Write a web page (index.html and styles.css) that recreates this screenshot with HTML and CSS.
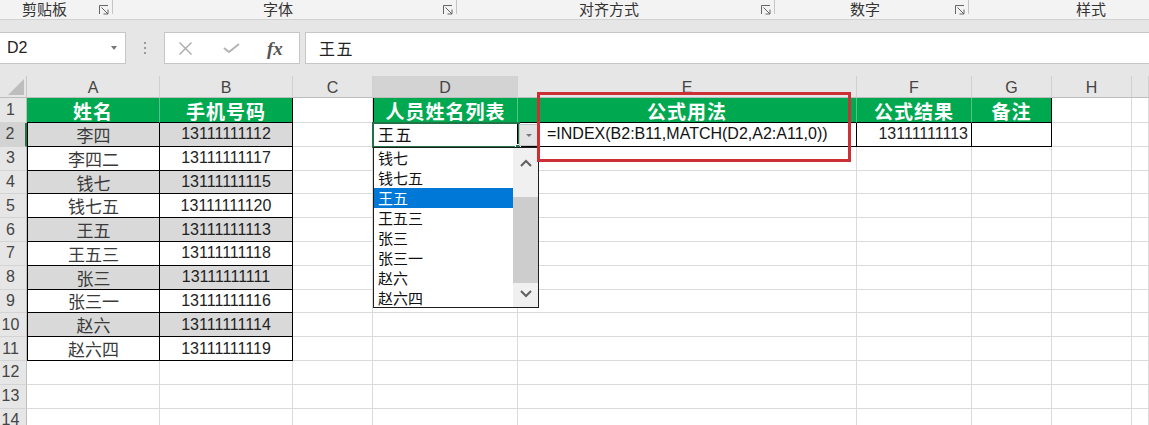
FILE: index.html
```html
<!DOCTYPE html>
<html lang="zh-CN">
<head>
<meta charset="utf-8">
<title>Excel INDEX MATCH</title>
<link rel="stylesheet" href="styles.css">
</head>
<body>
<div class="ribbon">
  <div class="grp g1"><span class="lbl">剪贴板</span><svg class="launch" viewBox="0 0 10 10"><path d="M0.5 9V0.5H9" /><path d="M2.5 2.5L9 9M9 4.5V9H4.5" /></svg><i class="sep"></i></div>
  <div class="grp g2"><span class="lbl">字体</span><svg class="launch" viewBox="0 0 10 10"><path d="M0.5 9V0.5H9" /><path d="M2.5 2.5L9 9M9 4.5V9H4.5" /></svg><i class="sep"></i></div>
  <div class="grp g3"><span class="lbl">对齐方式</span><svg class="launch" viewBox="0 0 10 10"><path d="M0.5 9V0.5H9" /><path d="M2.5 2.5L9 9M9 4.5V9H4.5" /></svg><i class="sep"></i></div>
  <div class="grp g4"><span class="lbl">数字</span><svg class="launch" viewBox="0 0 10 10"><path d="M0.5 9V0.5H9" /><path d="M2.5 2.5L9 9M9 4.5V9H4.5" /></svg><i class="sep"></i></div>
  <div class="grp g5"><span class="lbl">样式</span></div>
</div>
<div class="fbar">
  <div class="namebox"><span>D2</span><i class="nbarrow"></i></div>
  <div class="dots"><i></i><i></i><i></i></div>
  <div class="fxbox">
    <svg class="xicon" viewBox="0 0 15 13"><path d="M1.5 0.5L13.5 12.5M13.5 0.5L1.5 12.5" /></svg>
    <svg class="vicon" viewBox="0 0 17 10"><path d="M1 5L6 9L16 1" /></svg>
    <span class="fx">fx</span>
  </div>
  <div class="finput">王五</div>
</div>
<div class="sheet">
  <div class="corner"><svg viewBox="0 0 27 22"><polygon points="24,3 24,19 8,19" /></svg></div>
  <div class="ch">A</div><div class="ch">B</div><div class="ch">C</div><div class="ch on">D</div><div class="ch">E</div><div class="ch">F</div><div class="ch">G</div><div class="ch">H</div><div class="ch"></div>

  <div class="rh">1</div>
  <div class="c g">姓名</div><div class="c g rb">手机号码</div><div class="c"></div>
  <div class="c g tl">人员姓名列表</div><div class="c g">公式用法</div><div class="c g">公式结果</div><div class="c g rb">备注</div><div class="c"></div><div class="c"></div>

  <div class="rh on">2</div>
  <div class="c t tl alt nm">李四</div><div class="c t alt num">13111111112</div><div class="c"></div>
  <div class="c t tl dv">王五</div><div class="c t fm">=INDEX(B2:B11,MATCH(D2,A2:A11,0))</div><div class="c t num r">13111111113</div><div class="c t"></div><div class="c"></div><div class="c"></div>

  <div class="rh">3</div>
  <div class="c t tl nm">李四二</div><div class="c t num">13111111117</div><div class="c"></div><div class="c"></div><div class="c"></div><div class="c"></div><div class="c"></div><div class="c"></div><div class="c"></div>

  <div class="rh">4</div>
  <div class="c t tl alt nm">钱七</div><div class="c t alt num">13111111115</div><div class="c"></div><div class="c"></div><div class="c"></div><div class="c"></div><div class="c"></div><div class="c"></div><div class="c"></div>

  <div class="rh">5</div>
  <div class="c t tl nm">钱七五</div><div class="c t num">13111111120</div><div class="c"></div><div class="c"></div><div class="c"></div><div class="c"></div><div class="c"></div><div class="c"></div><div class="c"></div>

  <div class="rh">6</div>
  <div class="c t tl alt nm">王五</div><div class="c t alt num">13111111113</div><div class="c"></div><div class="c"></div><div class="c"></div><div class="c"></div><div class="c"></div><div class="c"></div><div class="c"></div>

  <div class="rh">7</div>
  <div class="c t tl nm">王五三</div><div class="c t num">13111111118</div><div class="c"></div><div class="c"></div><div class="c"></div><div class="c"></div><div class="c"></div><div class="c"></div><div class="c"></div>

  <div class="rh">8</div>
  <div class="c t tl alt nm">张三</div><div class="c t alt num">13111111111</div><div class="c"></div><div class="c"></div><div class="c"></div><div class="c"></div><div class="c"></div><div class="c"></div><div class="c"></div>

  <div class="rh">9</div>
  <div class="c t tl nm">张三一</div><div class="c t num">13111111116</div><div class="c"></div><div class="c"></div><div class="c"></div><div class="c"></div><div class="c"></div><div class="c"></div><div class="c"></div>

  <div class="rh">10</div>
  <div class="c t tl alt nm">赵六</div><div class="c t alt num">13111111114</div><div class="c"></div><div class="c"></div><div class="c"></div><div class="c"></div><div class="c"></div><div class="c"></div><div class="c"></div>

  <div class="rh">11</div>
  <div class="c t tl nm">赵六四</div><div class="c t num">13111111119</div><div class="c"></div><div class="c"></div><div class="c"></div><div class="c"></div><div class="c"></div><div class="c"></div><div class="c"></div>

  <div class="rh">12</div>
  <div class="c"></div><div class="c"></div><div class="c"></div><div class="c"></div><div class="c"></div><div class="c"></div><div class="c"></div><div class="c"></div><div class="c"></div>

  <div class="rh">13</div>
  <div class="c"></div><div class="c"></div><div class="c"></div><div class="c"></div><div class="c"></div><div class="c"></div><div class="c"></div><div class="c"></div><div class="c"></div>

  <div class="rh">14</div>
  <div class="c"></div><div class="c"></div><div class="c"></div><div class="c"></div><div class="c"></div><div class="c"></div><div class="c"></div><div class="c"></div><div class="c"></div>
</div>

<div class="selbox"></div>
<div class="handle"></div>
<div class="ddbtn"><i></i></div>
<div class="ddlist">
  <div class="items">
    <div class="item">钱七</div>
    <div class="item">钱七五</div>
    <div class="item on">王五</div>
    <div class="item">王五三</div>
    <div class="item">张三</div>
    <div class="item">张三一</div>
    <div class="item">赵六</div>
    <div class="item">赵六四</div>
  </div>
  <div class="sb">
    <svg class="chev up" viewBox="0 0 12 8"><path d="M1 7L6 2L11 7" /></svg>
    <div class="thumb"></div>
    <svg class="chev down" viewBox="0 0 12 8"><path d="M1 1L6 6L11 1" /></svg>
  </div>
</div>
<div class="redbox"></div>
</body>
</html>
```

FILE: styles.css
```css
* { box-sizing: border-box; }
body {
  margin: 0;
  width: 1149px;
  height: 425px;
  overflow: hidden;
  position: relative;
  background: #e6e6e6;
  font-family: "Liberation Sans", "Noto Sans CJK SC", sans-serif;
  color: #222;
}

/* ribbon group labels */
.ribbon {
  height: 20px;
  background: #f3f3f3;
  border-bottom: 1px solid #d2d2d2;
  display: flex;
}
.grp {
  display: flex;
  align-items: flex-start;
  height: 19px;
  font-family: "Noto Sans CJK SC", sans-serif;
  font-size: 15px;
  line-height: 18px;
  color: #333;
}
.g1 { width: 113px; }
.g2 { width: 344px; }
.g3 { width: 318px; }
.g4 { width: 194px; }
.g5 { flex: 1; }
.lbl { flex: 1; text-align: center; }
.g1 .lbl { padding-right: 10px; }
.g5 .lbl { text-align: left; padding-left: 107px; }
.launch {
  width: 10px;
  height: 10px;
  margin-top: 5px;
  margin-right: 3px;
  fill: none;
  stroke: #666;
  stroke-width: 1;
}
.sep {
  width: 1px;
  height: 14px;
  background: #c6c6c6;
}

/* formula bar */
.fbar {
  height: 56px;
  display: flex;
  padding: 12px 0;
}
.namebox {
  width: 126px;
  background: #fff;
  border: 1px solid #c6c6c6;
  border-left: none;
  display: flex;
  align-items: center;
  padding-left: 7px;
  font-size: 16px;
  color: #222;
}
.nbarrow {
  margin-left: auto;
  margin-right: 8px;
  width: 0;
  height: 0;
  border-left: 3px solid transparent;
  border-right: 3px solid transparent;
  border-top: 4px solid #777;
}
.dots {
  width: 38px;
  display: flex;
  flex-direction: column;
  align-items: center;
  justify-content: center;
  gap: 3px;
}
.dots i {
  width: 2px;
  height: 2px;
  background: #9a9a9a;
}
.fxbox {
  width: 136px;
  background: #fff;
  border: 1px solid #c6c6c6;
  display: flex;
  align-items: center;
  padding-left: 13px;
}
.xicon {
  width: 15px;
  height: 13px;
  fill: none;
  stroke: #aaa;
  stroke-width: 1.4;
}
.vicon {
  width: 17px;
  height: 10px;
  margin-left: 30px;
  fill: none;
  stroke: #b4b4b4;
  stroke-width: 2;
}
.fx {
  margin-left: 27px;
  font-family: "Liberation Serif", serif;
  font-style: italic;
  font-weight: bold;
  font-size: 19px;
  color: #555;
  line-height: 1;
}
.finput {
  flex: 1;
  margin-left: 5px;
  background: #fff;
  border: 1px solid #c6c6c6;
  border-right: none;
  display: flex;
  align-items: center;
  padding-left: 13px;
  font-family: "Noto Sans CJK SC", sans-serif;
  font-size: 16px;
  letter-spacing: 1.5px;
  color: #222;
}

/* sheet grid */
.sheet {
  display: grid;
  grid-template-columns: 27px 133px 133px 80px 145px 339px 115px 80px 80px 1fr;
  grid-template-rows: 22px 25px repeat(13, 23.8px);
  background: #fff;
}
.corner {
  background: #e6e6e6;
  border-right: 1px solid #c8c8c8;
  border-bottom: 1px solid #bdbdbd;
}
.corner svg { width: 27px; height: 22px; display: block; }
.corner polygon { fill: #bdbdbd; }
.ch {
  background: #e6e6e6;
  border-right: 1px solid #d0d0d0;
  border-bottom: 1px solid #bdbdbd;
  display: flex;
  align-items: center;
  justify-content: center;
  font-size: 16px;
  color: #444;
  padding-top: 2px;
}
.ch.on { background: #d3d3d3; }
.rh {
  background: #e6e6e6;
  border-right: 1px solid #bdbdbd;
  border-bottom: 1px solid #d4d4d4;
  display: flex;
  align-items: center;
  justify-content: center;
  padding-right: 5px;
  font-size: 16px;
  color: #444;
}
.rh.on { background: #d3d3d3; border-right: 2px solid #217346; }
.c {
  border-right: 1px solid #dadada;
  border-bottom: 1px solid #dadada;
  display: flex;
  align-items: center;
  justify-content: center;
  white-space: nowrap;
  overflow: hidden;
}
.t { border-right-color: #000; border-bottom-color: #000; }
.tl { border-left: 1px solid #000; }
.alt { background: #d9d9d9; }
.g {
  background: #00a950;
  color: #fff;
  font-family: "Noto Sans CJK SC", sans-serif;
  font-weight: bold;
  font-size: 19px;
  letter-spacing: 1px;
  border-right-color: #58c187;
  border-bottom-color: #000;
}
.g.rb { border-right-color: #000; }
.nm {
  font-family: "Noto Sans CJK SC", sans-serif;
  font-size: 17px;
  color: #3a3a3a;
}
.num {
  font-size: 16px;
  color: #222;
}
.num.r { justify-content: flex-end; padding-right: 3px; }
.dv {
  justify-content: flex-start;
  padding-left: 4px;
  font-family: "Noto Sans CJK SC", sans-serif;
  font-size: 16px;
  letter-spacing: 1.5px;
  color: #111;
}
.fm {
  justify-content: flex-start;
  padding-left: 29px;
  font-size: 16px;
  color: #111;
}

/* overlays */
.selbox {
  position: absolute;
  left: 372px;
  top: 122px;
  width: 148px;
  height: 26px;
  border: 2px solid #217346;
}
.handle {
  position: absolute;
  left: 515px;
  top: 144px;
  width: 6px;
  height: 6px;
  background: #217346;
  border: 1px solid #fff;
}
.ddbtn {
  position: absolute;
  left: 519px;
  top: 124px;
  width: 19px;
  height: 22px;
  background: #e3e3e3;
  border: 1px solid #c4c4c4;
  display: flex;
  align-items: center;
  justify-content: center;
}
.ddbtn i {
  width: 0;
  height: 0;
  border-left: 3px solid transparent;
  border-right: 3px solid transparent;
  border-top: 3px solid #777;
}
.ddlist {
  position: absolute;
  left: 373px;
  top: 147px;
  width: 166px;
  height: 161px;
  background: #fff;
  border: 1px solid #1e1e1e;
  display: flex;
}
.items { width: 139px; }
.item {
  height: 20px;
  line-height: 20px;
  padding-left: 4px;
  font-family: "Noto Sans CJK SC", sans-serif;
  font-size: 15px;
  color: #111;
}
.item.on { background: #0078d7; color: #fff; }
.sb {
  flex: 1;
  background: #f0f0f0;
  position: relative;
}
.chev {
  position: absolute;
  left: 7px;
  width: 12px;
  height: 8px;
  fill: none;
  stroke: #606060;
  stroke-width: 2;
}
.chev.up { top: 11px; }
.chev.down { top: 142px; }
.thumb {
  position: absolute;
  left: 0;
  right: 0;
  top: 49px;
  height: 86px;
  background: #cdcdcd;
}
.redbox {
  position: absolute;
  left: 537px;
  top: 92px;
  width: 314px;
  height: 70px;
  border: 3px solid #cd2f37;
}
```
